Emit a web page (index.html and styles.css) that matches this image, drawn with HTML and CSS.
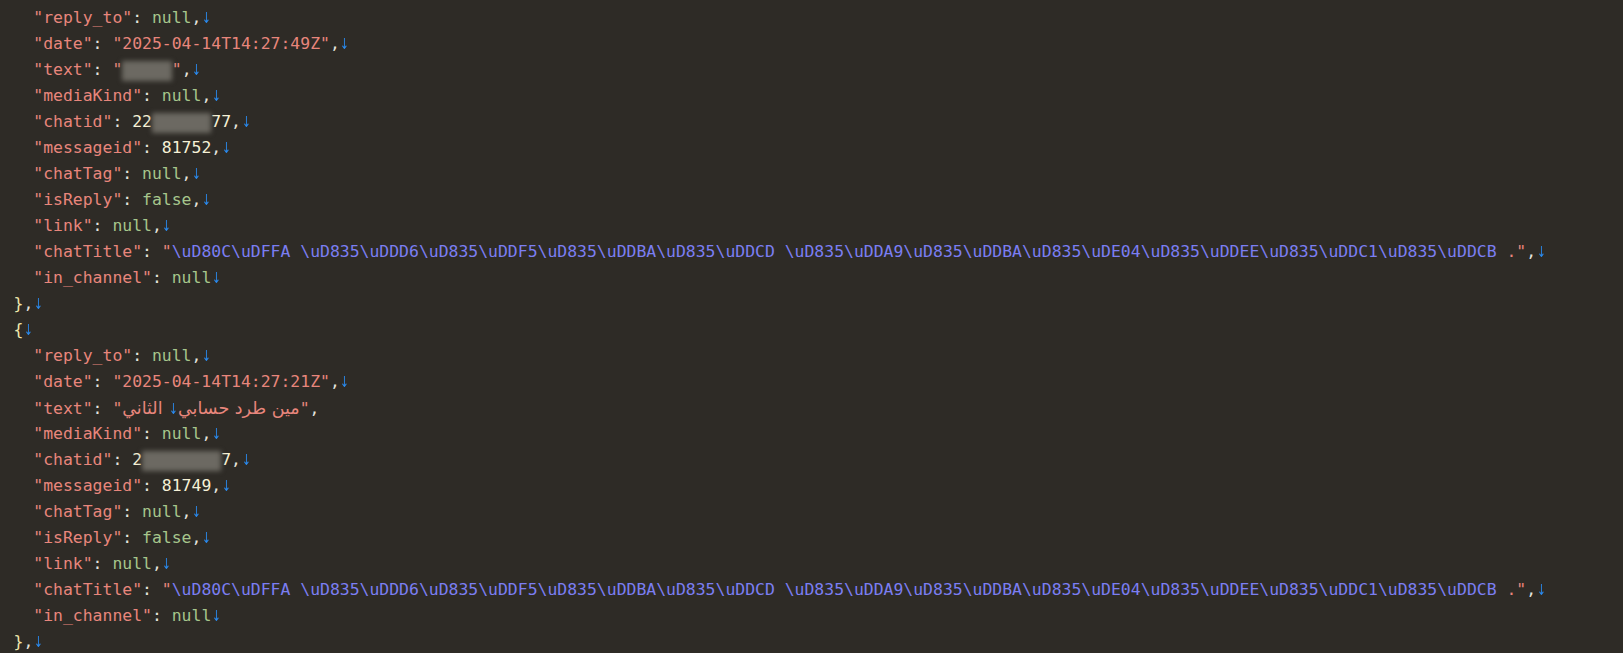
FILE: index.html
```html
<!DOCTYPE html>
<html lang="en">
<head>
<meta charset="utf-8">
<title>JSON</title>
<link rel="stylesheet" href="styles.css">
</head>
<body>
<div class="editor">
<div class="line">  <span class="k">"reply_to"</span><span class="p">: </span><span class="n">null</span><span class="p">,</span><span class="eol"><i>↓</i></span></div>
<div class="line">  <span class="k">"date"</span><span class="p">: </span><span class="s">"2025-04-14T14:27:49Z"</span><span class="p">,</span><span class="eol"><i>↓</i></span></div>
<div class="line">  <span class="k">"text"</span><span class="p">: </span><span class="s">"</span><span class="blur b5"></span><span class="s">"</span><span class="p">,</span><span class="eol"><i>↓</i></span></div>
<div class="line">  <span class="k">"mediaKind"</span><span class="p">: </span><span class="n">null</span><span class="p">,</span><span class="eol"><i>↓</i></span></div>
<div class="line">  <span class="k">"chatid"</span><span class="p">: </span><span class="num">22</span><span class="blur b6"></span><span class="num">77</span><span class="p">,</span><span class="eol"><i>↓</i></span></div>
<div class="line">  <span class="k">"messageid"</span><span class="p">: </span><span class="num">81752</span><span class="p">,</span><span class="eol"><i>↓</i></span></div>
<div class="line">  <span class="k">"chatTag"</span><span class="p">: </span><span class="n">null</span><span class="p">,</span><span class="eol"><i>↓</i></span></div>
<div class="line">  <span class="k">"isReply"</span><span class="p">: </span><span class="n">false</span><span class="p">,</span><span class="eol"><i>↓</i></span></div>
<div class="line">  <span class="k">"link"</span><span class="p">: </span><span class="n">null</span><span class="p">,</span><span class="eol"><i>↓</i></span></div>
<div class="line">  <span class="k">"chatTitle"</span><span class="p">: </span><span class="s">"</span><span class="e">\uD80C\uDFFA \uD835\uDDD6\uD835\uDDF5\uD835\uDDBA\uD835\uDDCD \uD835\uDDA9\uD835\uDDBA\uD835\uDE04\uD835\uDDEE\uD835\uDDC1\uD835\uDDCB </span><span class="s">."</span><span class="p">,</span><span class="eol"><i>↓</i></span></div>
<div class="line">  <span class="k">"in_channel"</span><span class="p">: </span><span class="n">null</span><span class="eol"><i>↓</i></span></div>
<div class="line"><span class="b">}</span><span class="p">,</span><span class="eol"><i>↓</i></span></div>
<div class="line"><span class="b">{</span><span class="eol"><i>↓</i></span></div>
<div class="line">  <span class="k">"reply_to"</span><span class="p">: </span><span class="n">null</span><span class="p">,</span><span class="eol"><i>↓</i></span></div>
<div class="line">  <span class="k">"date"</span><span class="p">: </span><span class="s">"2025-04-14T14:27:21Z"</span><span class="p">,</span><span class="eol"><i>↓</i></span></div>
<div class="line">  <span class="k">"text"</span><span class="p">: </span><span class="s">"</span><bdi class="ar s">الثاني</bdi><span class="ar"> </span><span class="eol"><i>↓</i></span><bdi class="ar s">مين طرد حسابي</bdi><span class="s">"</span><span class="p">,</span></div>
<div class="line">  <span class="k">"mediaKind"</span><span class="p">: </span><span class="n">null</span><span class="p">,</span><span class="eol"><i>↓</i></span></div>
<div class="line">  <span class="k">"chatid"</span><span class="p">: </span><span class="num">2</span><span class="blur b8"></span><span class="num">7</span><span class="p">,</span><span class="eol"><i>↓</i></span></div>
<div class="line">  <span class="k">"messageid"</span><span class="p">: </span><span class="num">81749</span><span class="p">,</span><span class="eol"><i>↓</i></span></div>
<div class="line">  <span class="k">"chatTag"</span><span class="p">: </span><span class="n">null</span><span class="p">,</span><span class="eol"><i>↓</i></span></div>
<div class="line">  <span class="k">"isReply"</span><span class="p">: </span><span class="n">false</span><span class="p">,</span><span class="eol"><i>↓</i></span></div>
<div class="line">  <span class="k">"link"</span><span class="p">: </span><span class="n">null</span><span class="p">,</span><span class="eol"><i>↓</i></span></div>
<div class="line">  <span class="k">"chatTitle"</span><span class="p">: </span><span class="s">"</span><span class="e">\uD80C\uDFFA \uD835\uDDD6\uD835\uDDF5\uD835\uDDBA\uD835\uDDCD \uD835\uDDA9\uD835\uDDBA\uD835\uDE04\uD835\uDDEE\uD835\uDDC1\uD835\uDDCB </span><span class="s">."</span><span class="p">,</span><span class="eol"><i>↓</i></span></div>
<div class="line">  <span class="k">"in_channel"</span><span class="p">: </span><span class="n">null</span><span class="eol"><i>↓</i></span></div>
<div class="line"><span class="b">}</span><span class="p">,</span><span class="eol"><i>↓</i></span></div>
</div>
</body>
</html>
```
FILE: styles.css
```css
html, body {
  margin: 0;
  padding: 0;
  background: #2e2b26;
  height: 100%;
  overflow: hidden;
}
.editor {
  padding: 5px 0 0 13.5px;
  font-family: "DejaVu Sans Mono", "Liberation Mono", monospace;
  font-size: 16.43px;
  line-height: 26px;
  color: #e2e2dc;
}
.line {
  white-space: pre;
  height: 26px;
}
.k, .s { color: #e8867c; }
.p { color: #e4e4de; }
.n { color: #a6c68c; }
.num { color: #f6f1d6; }
.e { color: #7b7ef2; }
.b { color: #f0e7ab; }
.eol {
  color: #2a8aee;
  display: inline-block;
  width: 9.89px;
  text-align: center;
}
.eol i {
  display: inline-block;
  font-style: normal;
  font-family: "DejaVu Sans", sans-serif;
  font-size: 15px;
  transform: scaleX(0.7);
  margin: 0 -2px;
}
.ar {
  font-family: "DejaVu Sans", sans-serif;
  font-size: 17.5px;
}
.blur {
  display: inline-block;
  background: #6c6962;
  height: 20px;
  vertical-align: middle;
  filter: blur(2.5px);
}
.b5 { width: 49.5px; }
.b6 { width: 59.3px; }
.b8 { width: 79.1px; }
```
